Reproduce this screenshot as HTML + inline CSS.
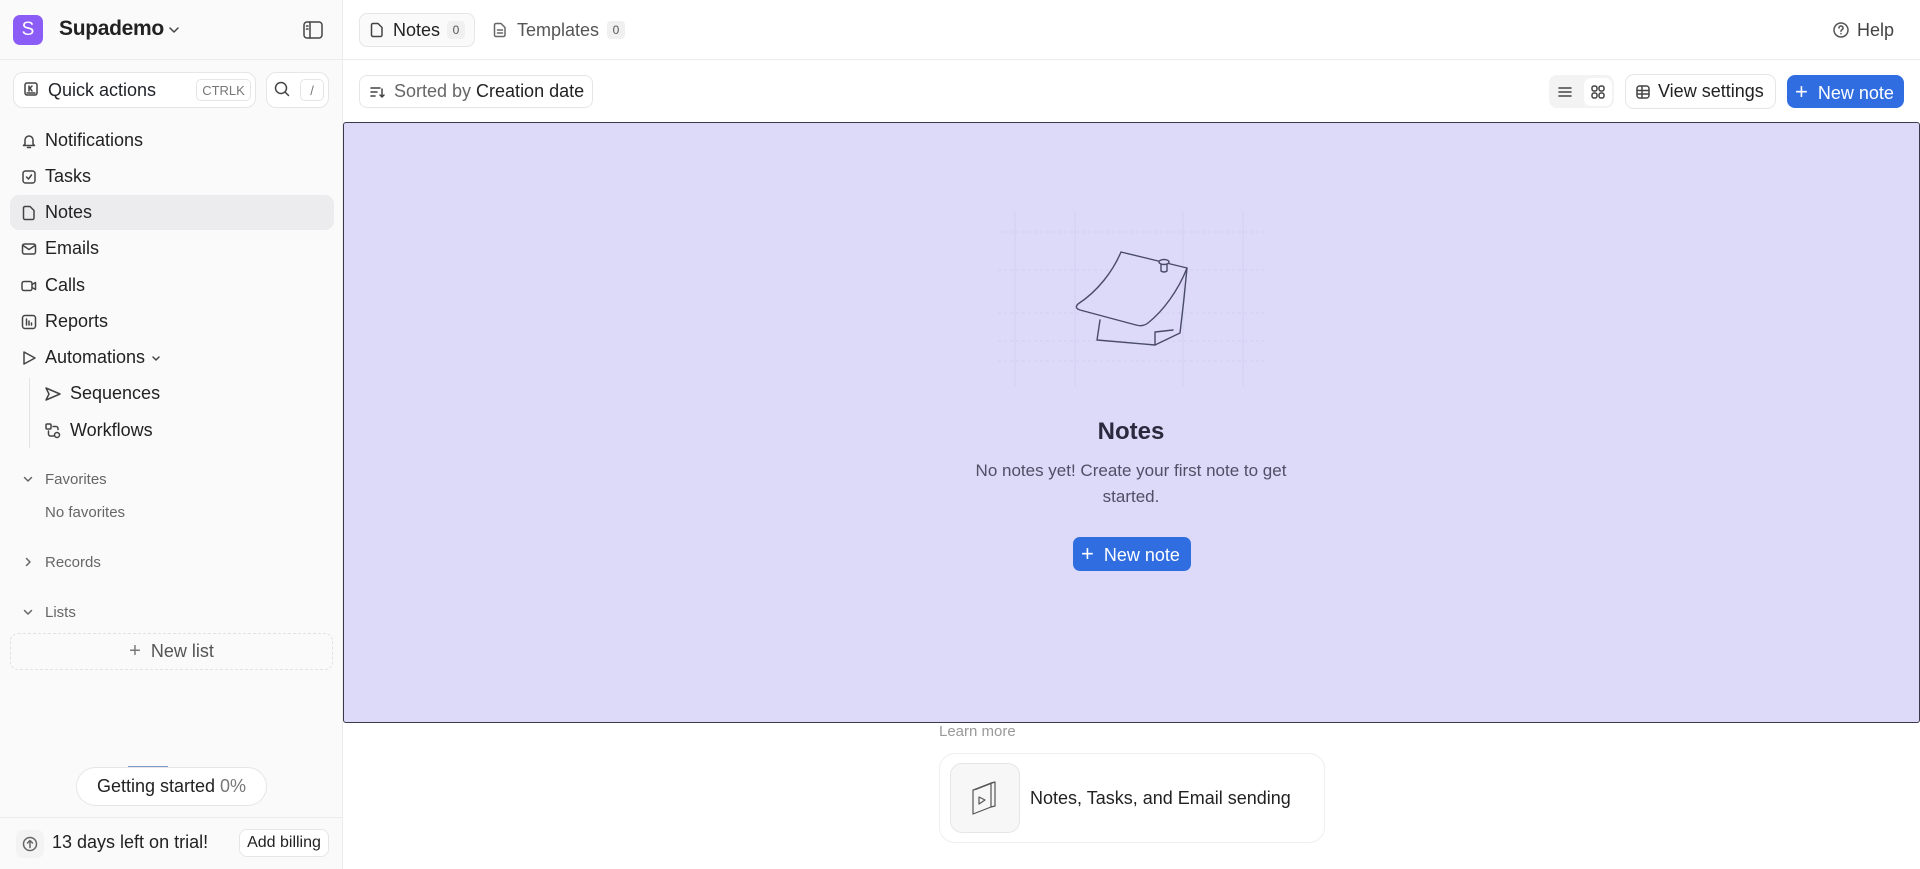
<!DOCTYPE html>
<html><head><meta charset="utf-8"><style>
*{box-sizing:border-box;margin:0;padding:0}
body{width:1920px;height:869px;overflow:hidden;font-family:"Liberation Sans",sans-serif;color:#1f2328;background:#fff;position:relative}
.abs{position:absolute}
#side{position:absolute;left:0;top:0;width:343px;height:869px;background:#fafafa;border-right:1px solid #ececec}
.ico{position:absolute;stroke:#444;fill:none;stroke-width:1.5;stroke-linecap:round;stroke-linejoin:round}
.item{position:absolute;left:45px;font-size:18px;color:#222}
.sec{position:absolute;left:45px;font-size:15px;color:#666}
.btn{position:absolute;border:1px solid #e6e6e6;border-radius:8px;background:#fff}
</style></head><body>
<div id="side">
 <div class="abs" style="left:13px;top:15px;width:30px;height:30px;border-radius:7px;background:#8b5cf6;color:#fff;font-size:19px;text-align:center;line-height:30px">S</div>
 <div class="abs" style="left:59px;top:17px;font-size:21px;font-weight:bold;color:#222;letter-spacing:-0.3px">Supademo</div>
 <svg class="ico" style="left:167px;top:23px" width="14" height="14" viewBox="0 0 14 14"><path d="M3 5l4 4 4-4"/></svg>
 <svg class="ico" style="left:302px;top:19px" width="22" height="22" viewBox="0 0 22 22"><rect x="2" y="3" width="18" height="16" rx="3"/><path d="M8 3v16M4.5 7h1.5M4.5 10h1.5"/></svg>
 <div class="abs" style="left:0;top:59px;width:343px;border-top:1px solid #ececec"></div>
 <div class="btn" style="left:13px;top:72px;width:243px;height:36px;border-radius:10px"></div>
 <svg class="ico" style="left:23px;top:81px" width="16" height="16" viewBox="0 0 16 16"><rect x="2" y="2" width="12" height="12" rx="2"/><path d="M6 5v5M6 8l3-3M7 7l2 3M4 12h8"/></svg>
 <div class="abs" style="left:48px;top:80px;font-size:18px">Quick actions</div>
 <div class="abs" style="left:196px;top:79px;width:55px;height:22px;border:1px solid #e6e6e6;border-radius:5px;font-size:13px;color:#777;text-align:center;line-height:21px">CTRLK</div>
 <div class="btn" style="left:266px;top:72px;width:63px;height:36px;border-radius:10px"></div>
 <svg class="ico" style="left:273px;top:80px" width="18" height="18" viewBox="0 0 18 18"><circle cx="8" cy="8" r="5.5"/><path d="M12 12l3.5 3.5"/></svg>
 <div class="abs" style="left:300px;top:79px;width:24px;height:22px;border:1px solid #e6e6e6;border-radius:5px;font-size:13px;color:#777;text-align:center;line-height:21px">/</div>

 <div class="abs" style="left:10px;top:195px;width:324px;height:35px;border-radius:9px;background:#ececee"></div>
 <svg class="ico" style="left:20px;top:132px" width="18" height="18" viewBox="0 0 18 18"><path d="M5 12V8a4 4 0 018 0v4l1.5 1.5h-11zM7.5 15.5h3"/></svg>
 <div class="item" style="top:130px">Notifications</div>
 <svg class="ico" style="left:20px;top:168px" width="18" height="18" viewBox="0 0 18 18"><rect x="3" y="3" width="12" height="12" rx="2.5"/><path d="M6.5 9l2 2 3-4"/></svg>
 <div class="item" style="top:166px">Tasks</div>
 <svg class="ico" style="left:20px;top:204px" width="18" height="18" viewBox="0 0 18 18"><path d="M5 2.5h5l4 4V14a1.5 1.5 0 01-1.5 1.5h-7.5A1.5 1.5 0 013.5 14V4A1.5 1.5 0 015 2.5z"/></svg>
 <div class="item" style="top:202px">Notes</div>
 <svg class="ico" style="left:20px;top:240px" width="18" height="18" viewBox="0 0 18 18"><rect x="2.5" y="4" width="13" height="10" rx="2"/><path d="M3 5.5l6 4 6-4"/></svg>
 <div class="item" style="top:238px">Emails</div>
 <svg class="ico" style="left:20px;top:277px" width="18" height="18" viewBox="0 0 18 18"><rect x="2" y="4.5" width="10" height="9" rx="2"/><path d="M12 7.5l3.5-2v7l-3.5-2"/></svg>
 <div class="item" style="top:275px">Calls</div>
 <svg class="ico" style="left:20px;top:313px" width="18" height="18" viewBox="0 0 18 18"><rect x="2.5" y="2.5" width="13" height="13" rx="2.5"/><path d="M6.5 6v6M9 8v4M11.5 10v2"/></svg>
 <div class="item" style="top:311px">Reports</div>
 <svg class="ico" style="left:20px;top:349px" width="18" height="18" viewBox="0 0 18 18"><path d="M4 3l11 6-11 6z"/></svg>
 <div class="item" style="top:347px">Automations</div>
 <svg class="ico" style="left:150px;top:352px" width="12" height="12" viewBox="0 0 12 12"><path d="M3 5l3 3 3-3"/></svg>
 <div class="abs" style="left:29px;top:378px;height:70px;border-left:1px solid #e3e3e3"></div>
 <svg class="ico" style="left:44px;top:385px" width="18" height="18" viewBox="0 0 18 18"><path d="M2 3l14 6-14 6 3-6z"/></svg>
 <div class="item" style="left:70px;top:383px">Sequences</div>
 <svg class="ico" style="left:44px;top:422px" width="18" height="18" viewBox="0 0 18 18"><rect x="2" y="2" width="5" height="5" rx="1"/><circle cx="13" cy="13" r="2.5"/><path d="M9 4.5h3a2 2 0 012 2v1M4.5 9v3a2 2 0 002 2H10"/></svg>
 <div class="item" style="left:70px;top:420px">Workflows</div>

 <svg class="ico" style="left:22px;top:473px;stroke:#666" width="12" height="12" viewBox="0 0 12 12"><path d="M2.5 4.5l3.5 3.5 3.5-3.5"/></svg>
 <div class="sec" style="top:471px">Favorites</div>
 <div class="sec" style="top:504px;font-size:15px">No favorites</div>
 <svg class="ico" style="left:22px;top:556px;stroke:#666" width="12" height="12" viewBox="0 0 12 12"><path d="M4.5 2.5l3.5 3.5-3.5 3.5"/></svg>
 <div class="sec" style="top:554px">Records</div>
 <svg class="ico" style="left:22px;top:606px;stroke:#666" width="12" height="12" viewBox="0 0 12 12"><path d="M2.5 4.5l3.5 3.5 3.5-3.5"/></svg>
 <div class="sec" style="top:604px">Lists</div>
 <div class="abs" style="left:10px;top:633px;width:323px;height:37px;border:1px dashed #e2e2e2;border-radius:8px;text-align:center;line-height:35px;font-size:18px;color:#555"><span style="font-size:20px;color:#777">+</span>&nbsp; New list</div>

 <div class="abs" style="left:128px;top:766px;width:40px;border-top:2px solid #7a9cc6"></div>
 <div class="abs" style="left:76px;top:767px;width:191px;height:39px;border:1px solid #e6e6e6;border-radius:20px;background:#fff;font-size:18px;text-align:center;line-height:37px;color:#222">Getting started <span style="color:#777">0%</span></div>
 <div class="abs" style="left:0;top:817px;width:343px;border-top:1px solid #ececec"></div>
 <div class="abs" style="left:16px;top:830px;width:28px;height:28px;border-radius:7px;background:#f3f3f3"></div>
 <svg class="ico" style="left:21px;top:835px;stroke:#666" width="18" height="18" viewBox="0 0 18 18"><circle cx="9" cy="9" r="6.5"/><path d="M9 12.5v-7M6.5 8L9 5.5 11.5 8"/></svg>
 <div class="abs" style="left:52px;top:832px;font-size:18px;color:#222">13 days left on trial!</div>
 <div class="btn" style="left:239px;top:829px;width:90px;height:28px;font-size:16px;text-align:center;line-height:26px;color:#222">Add billing</div>
</div>

<!-- header -->
<div class="abs" style="left:343px;top:59px;width:1577px;border-top:1px solid #ededed"></div>
<div class="btn" style="left:359px;top:13px;width:116px;height:34px;background:#fafafa"></div>
<svg class="ico" style="left:368px;top:21px" width="18" height="18" viewBox="0 0 18 18"><path d="M5 2.5h5l4 4V14a1.5 1.5 0 01-1.5 1.5h-7.5A1.5 1.5 0 013.5 14V4A1.5 1.5 0 015 2.5z"/></svg>
<div class="abs" style="left:393px;top:20px;font-size:18px;color:#222">Notes</div>
<div class="abs" style="left:447px;top:21px;width:18px;height:18px;background:#f0f0f0;border-radius:4px;font-size:12px;text-align:center;line-height:18px;color:#555">0</div>
<svg class="ico" style="left:491px;top:21px;stroke:#666" width="18" height="18" viewBox="0 0 18 18"><path d="M5 2.5h5l4 4V14a1.5 1.5 0 01-1.5 1.5h-7.5A1.5 1.5 0 013.5 14V4A1.5 1.5 0 015 2.5zM6.5 9h5M6.5 12h5"/></svg>
<div class="abs" style="left:517px;top:20px;font-size:18px;color:#555">Templates</div>
<div class="abs" style="left:607px;top:21px;width:18px;height:18px;background:#f0f0f0;border-radius:4px;font-size:12px;text-align:center;line-height:18px;color:#555">0</div>
<svg class="ico" style="left:1832px;top:21px;stroke:#555" width="18" height="18" viewBox="0 0 18 18"><circle cx="9" cy="9" r="7"/><path d="M7 7a2 2 0 113 1.7c-.7.4-1 .8-1 1.5M9 12.5v.3"/></svg>
<div class="abs" style="left:1857px;top:20px;font-size:18px;color:#444">Help</div>

<!-- toolbar -->
<div class="btn" style="left:359px;top:75px;width:234px;height:33px"></div>
<svg class="ico" style="left:368px;top:83px" width="18" height="18" viewBox="0 0 18 18"><path d="M3 5h9M3 9h6M3 13h4M14 6v8M12 12l2 2 2-2"/></svg>
<div class="abs" style="left:394px;top:81px;font-size:18px;color:#666">Sorted by <span style="color:#222">Creation date</span></div>
<div class="abs" style="left:1549px;top:75px;width:65px;height:33px;background:#f3f3f4;border-radius:8px"></div>
<svg class="ico" style="left:1556px;top:83px" width="18" height="18" viewBox="0 0 18 18"><path d="M3 5h12M3 9h12M3 13h12"/></svg>
<div class="abs" style="left:1584px;top:78px;width:28px;height:28px;background:#fff;border-radius:7px"></div>
<svg class="ico" style="left:1589px;top:83px" width="18" height="18" viewBox="0 0 18 18"><rect x="3" y="3" width="5" height="5" rx="2"/><rect x="10" y="3" width="5" height="5" rx="2"/><rect x="3" y="10" width="5" height="5" rx="2"/><rect x="10" y="10" width="5" height="5" rx="2"/></svg>
<div class="btn" style="left:1625px;top:74px;width:151px;height:35px;border-radius:9px"></div>
<svg class="ico" style="left:1634px;top:83px" width="18" height="18" viewBox="0 0 18 18"><rect x="3" y="3" width="12" height="12" rx="2.5"/><path d="M3 7.5h12M3 11h12M8 3v12"/></svg>
<div class="abs" style="left:1658px;top:81px;font-size:18px;color:#222">View settings</div>
<div class="abs" style="left:1787px;top:75px;width:117px;height:33px;background:#2f6de1;border-radius:8px;color:#fff;font-size:18px;line-height:33px;padding-left:8px"><span style="font-size:22px;font-weight:300">+</span>&nbsp; New note</div>

<!-- main area -->
<div class="abs" style="left:343px;top:122px;width:1577px;height:601px;background:#dcdaf8;border:1px solid #3a3a4a;border-radius:3px"></div>
<svg class="abs" style="left:998px;top:211px" width="267" height="175" viewBox="0 0 267 175">
 <g stroke="#d2d0f2" stroke-width="1"><path d="M0 21H267M0 59H267M0 102H267M0 130H267M0 150H267" stroke-dasharray="3 3"/><path d="M17 0V175M77 0V175M185 0V175M245 0V175"/></g>
 <g fill="none" stroke="#4a4a6a" stroke-width="1.4" stroke-linejoin="round" stroke-linecap="round">
  <path d="M102 109L99 129L157 134L182 122Q186 90 189 57"/>
  <path d="M157 134L157 121L175 119"/>
  <path d="M123 41L189 57C180 80 165 100 150 112Q145 116 138 114L82 99Q76 97 80 93C100 80 115 60 123 41Z" fill="#dcdaf8"/>
  <path d="M163 52v8q3 2 6 0v-8"/>
  <ellipse cx="166" cy="51" rx="5" ry="2.5" fill="#dcdaf8"/>
 </g>
</svg>
<div class="abs" style="left:931px;top:418px;width:400px;text-align:center;font-size:24px;font-weight:bold;color:#2a2a3e">Notes</div>
<div class="abs" style="left:971px;top:458px;width:320px;text-align:center;font-size:17px;line-height:26px;color:#4f4f66">No notes yet! Create your first note to get started.</div>
<div class="abs" style="left:1073px;top:537px;width:118px;height:34px;background:#2f6de1;border-radius:7px;color:#fff;font-size:18px;line-height:34px;padding-left:8px"><span style="font-size:22px;font-weight:300">+</span>&nbsp; New note</div>

<div class="abs" style="left:939px;top:723px;font-size:15px;color:#999">Learn more</div>
<div class="abs" style="left:939px;top:753px;width:386px;height:90px;border:1px solid #eee;border-radius:16px"></div>
<div class="abs" style="left:950px;top:763px;width:70px;height:70px;border:1px solid #e6e6e6;border-radius:12px;background:#f7f7f7"></div>
<svg class="ico" style="left:965px;top:778px;stroke:#555;stroke-width:1.2" width="40" height="40" viewBox="0 0 40 40"><path d="M8 12l18-7v24l-18 7zM8 12l4-1 18-7-4 1M26 5l4-1v24l-4 1"/><path d="M14 19l6 3-6 4z"/></svg>
<div class="abs" style="left:1030px;top:788px;font-size:18px;color:#222">Notes, Tasks, and Email sending</div>
</body></html>
